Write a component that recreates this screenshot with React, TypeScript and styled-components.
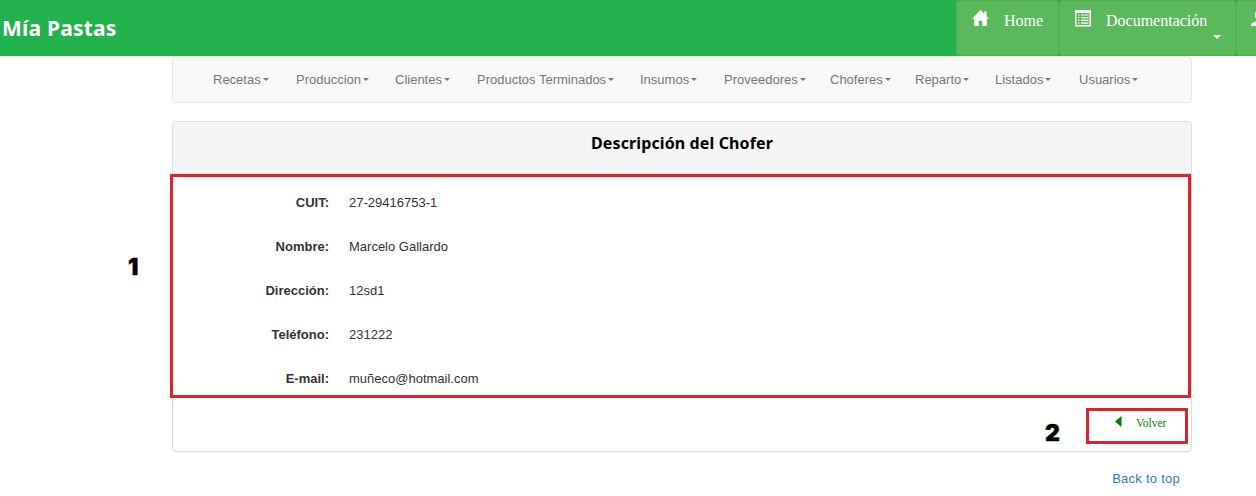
import React from "react";
import styled, { createGlobalStyle } from "styled-components";

const Global = createGlobalStyle`
  * { box-sizing: border-box; }
  html, body { margin: 0; background: #fff; }
  body { width: 1256px; height: 496px; overflow: hidden; font: 13px/20px "Liberation Sans", Arial, sans-serif; color: #333; }
`;

const Page = styled.div`
  position: relative;
  width: 1256px;
  height: 496px;
  overflow: hidden;
`;

const Header = styled.header`
  display: flex;
  justify-content: space-between;
  height: 56px;
  background: #22b14c;
  overflow: hidden;
`;

const Brand = styled.div`
  padding: 14px 0 0 2px;
  font: bold 21px/28px "Noto Sans", "Open Sans", sans-serif;
  letter-spacing: 0.2px;
  color: #fff;
  white-space: nowrap;
`;

const Actions = styled.div`
  display: flex;
  flex: none;
  width: 300px;
`;

const HeaderButton = styled.a<{ $width: number; $pad: number; $gap: number }>`
  display: flex;
  flex: none;
  flex-wrap: wrap;
  align-content: flex-start;
  width: ${(p) => p.$width}px;
  height: 56px;
  padding: 8px 0 0 ${(p) => p.$pad}px;
  column-gap: ${(p) => p.$gap}px;
  border: 1px solid #50b254;
  border-radius: 4px;
  background: #5cb85c;
  color: #fff;
  font: 16px/24px "Liberation Serif", "Times New Roman", serif;
  svg { flex: none; display: block; margin-top: 1px; }
`;

const Caret = styled.span<{ $size: number }>`
  display: inline-block;
  width: 0;
  height: 0;
  border: ${(p) => p.$size}px solid transparent;
  border-top-color: currentColor;
  border-bottom: 0;
`;

const CaretLine = styled.span`
  display: flex;
  width: 100%;
  padding: 2px 0 0 138px;
`;

const Container = styled.main`
  width: 1020px;
  margin-left: 172px;
`;

const Menu = styled.nav`
  display: flex;
  height: 47px;
  padding-left: 40px;
  border: 1px solid #e7e7e7;
  border-radius: 4px;
  background: #f8f8f8;
`;

const MenuItem = styled.a<{ $width: number }>`
  display: flex;
  flex: none;
  align-items: center;
  gap: 2px;
  width: ${(p) => p.$width}px;
  height: 45px;
  color: #777;
  white-space: nowrap;
`;

const Panel = styled.section`
  height: 331px;
  margin-top: 18px;
  border: 1px solid #ddd;
  border-radius: 4px;
  background: #fff;
  box-shadow: 0 1px 1px rgba(0, 0, 0, 0.05);
`;

const PanelTitle = styled.h3`
  height: 52px;
  margin: 0;
  padding-top: 10px;
  border-bottom: 1px solid #ddd;
  border-radius: 3px 3px 0 0;
  background: #f4f4f4;
  color: #000;
  font: bold 16px/22px "Noto Sans", "Open Sans", sans-serif;
  letter-spacing: 0.12px;
  text-align: center;
`;

const Details = styled.dl`
  width: 1021px;
  height: 224px;
  margin: 0 0 0 -3px;
  padding-top: 16px;
  border: 3px solid #da252d;
`;

const Field = styled.div`
  display: flex;
  gap: 20px;
  height: 44px;
`;

const Term = styled.dt`
  width: 156px;
  font-weight: bold;
  text-align: right;
`;

const Value = styled.dd`
  margin: 0;
`;

const PanelFooter = styled.div`
  display: flex;
  justify-content: flex-end;
  padding: 10px 3px 0 0;
`;

const BackButton = styled.a`
  display: flex;
  gap: 14px;
  width: 102px;
  height: 36px;
  padding: 3px 0 0 26px;
  border: 3px solid #da252d;
  color: #008000;
  font: 11.5px/18px "Liberation Serif", "Times New Roman", serif;
  svg { flex: none; margin-top: 2px; }
`;

const TopLink = styled.a`
  display: block;
  margin-top: 17px;
  padding-right: 12px;
  color: #337ab7;
  letter-spacing: 0.25px;
  text-align: right;
`;

const Callout = styled.span<{ $x: number; $y: number }>`
  position: absolute;
  left: ${(p) => p.$x}px;
  top: ${(p) => p.$y}px;
  color: #000;
  font: 900 23px/24px Inter, "Liberation Sans", sans-serif;
  -webkit-text-stroke: 0.4px #000;
`;

const menu: [string, number][] = [
  ["Recetas", 83],
  ["Produccion", 99],
  ["Clientes", 82],
  ["Productos Terminados", 163],
  ["Insumos", 84],
  ["Proveedores", 106],
  ["Choferes", 85],
  ["Reparto", 80],
  ["Listados", 84],
  ["Usuarios", 60],
];

const fields = [
  ["CUIT:", "27-29416753-1"],
  ["Nombre:", "Marcelo Gallardo"],
  ["Dirección:", "12sd1"],
  ["Teléfono:", "231222"],
  ["E-mail:", "muñeco@hotmail.com"],
];

export default function App() {
  return (
    <Page>
      <Global />
      <Header>
        <Brand>Mía Pastas</Brand>
        <Actions>
          <HeaderButton $width={103} $pad={15} $gap={15}>
            <svg width="17" height="17" viewBox="0 0 17 17" fill="#fff">
              <path d="M8.5 0 0 8.700h2.200V16h4.500v-5.300h3.600V16h4.500V8.700H17l-2.400-2.500V1.600h-2.300v2.200z" />
            </svg>
            <span>Home</span>
          </HeaderButton>
          <HeaderButton $width={177} $pad={15} $gap={15}>
            <svg width="16" height="17" viewBox="0 0 16 17">
              <path fill="#fff" fillRule="evenodd" d="M0 0h16v16.500H0zM1.500 3v12h13V3z" />
              <path stroke="#fff" strokeWidth="1.200" d="M3 5h1.500M6 5h7.500M3 7.700h1.500M6 7.700h7.500M3 10.400h1.500M6 10.400h7.500M3 13.100h1.500M6 13.100h7.500" />
            </svg>
            <span>Documentación</span>
            <CaretLine><Caret $size={4} /></CaretLine>
          </HeaderButton>
          <HeaderButton $width={60} $pad={14} $gap={15}>
            <svg width="17" height="17" viewBox="0 0 17 17" fill="#fff">
              <path d="M8.500 0C5.500 0 4 2 4 4.800c0 2 .6 3.600 1.700 4.600v1.400L1.200 13Q0 13.700 0 16h17q0-2.300-1.200-3l-4.500-2.200V9.400C12.400 8.400 13 6.800 13 4.800 13 2 11.500 0 8.500 0z" />
            </svg>
          </HeaderButton>
        </Actions>
      </Header>
      <Container>
        <Menu>
          {menu.map(([label, width]) => (
            <MenuItem key={label} $width={width}>
              {label}
              <Caret $size={3} />
            </MenuItem>
          ))}
        </Menu>
        <Panel>
          <PanelTitle>Descripción del Chofer</PanelTitle>
          <Details>
            {fields.map(([term, value]) => (
              <Field key={term}>
                <Term>{term}</Term>
                <Value>{value}</Value>
              </Field>
            ))}
          </Details>
          <PanelFooter>
            <BackButton>
              <svg width="7" height="11" viewBox="0 0 7 11" fill="#008000">
                <path d="M6.500 0v11L0 5.500z" />
              </svg>
              Volver
            </BackButton>
          </PanelFooter>
        </Panel>
        <TopLink>Back to top</TopLink>
      </Container>
      <Callout $x={128} $y={255}>1</Callout>
      <Callout $x={1045} $y={421}>2</Callout>
    </Page>
  );
}
